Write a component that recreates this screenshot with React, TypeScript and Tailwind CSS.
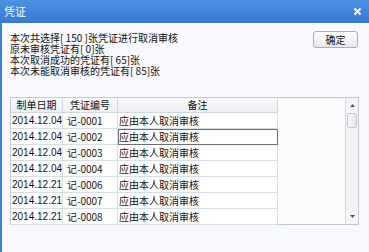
const rows = [
  { date: '2014.12.04', no: '记-0001' },
  { date: '2014.12.04', no: '记-0002', focus: true },
  { date: '2014.12.04', no: '记-0003' },
  { date: '2014.12.04', no: '记-0004' },
  { date: '2014.12.21', no: '记-0006' },
  { date: '2014.12.21', no: '记-0007' },
  { date: '2014.12.21', no: '记-0008' },
]

export default function App() {
  return (
    <div className="flex h-[252px] w-[369px] flex-col overflow-hidden bg-[#f7f9fd] font-['Noto_Sans_CJK_SC',sans-serif] text-[#111]">
      {/* title bar */}
      <div className="flex h-[23px] items-center justify-between bg-gradient-to-b from-[#4d91e3] to-[#3878d4] pr-[7px] pl-[4px] text-[11px] text-white">
        <span>凭证</span>
        <svg width="9" height="9" viewBox="0 0 9 9">
          <path d="M1.5 1.5 L7.5 7.5 M7.5 1.5 L1.5 7.5" stroke="#fff" strokeWidth="2" />
        </svg>
      </div>

      <div className="flex flex-1 flex-col border-l-2 border-[#3d7fd9] pl-[8px]">
        <div className="flex items-start justify-between pt-[9px] pr-[11px]">
          <div className="text-[10px] leading-[11px] whitespace-pre">
            <div>本次共选择[ 150 ]张凭证进行取消审核</div>
            <div>原未审核凭证有[ 0]张</div>
            <div>本次取消成功的凭证有[ 65]张</div>
            <div>本次未能取消审核的凭证有[ 85]张</div>
          </div>
          <button className="mt-[-1px] flex h-[17px] w-[45px] items-center justify-center rounded-[3px] border border-[#a9afb8] bg-gradient-to-b from-[#ffffff] to-[#e6e8ec] text-[10px]">
            确定
          </button>
        </div>

        <div className="mt-[21px] flex h-[128px] w-[349px] border border-[#c3c8d0] bg-[#fafbfd]">
          <div className="flex flex-1 flex-col">
            <div className="flex h-[15px] text-[10px] leading-[14px]">
              <div className="w-[52px] border-r border-b border-[#d2d8e2] bg-gradient-to-b from-[#fbfbfc] to-[#eceef2] text-center">制单日期</div>
              <div className="w-[55px] border-r border-b border-[#d2d8e2] bg-gradient-to-b from-[#fbfbfc] to-[#eceef2] text-center">凭证编号</div>
              <div className="w-[160px] border-r border-b border-[#d2d8e2] bg-gradient-to-b from-[#fbfbfc] to-[#eceef2] text-center">备注</div>
            </div>
            {rows.map((r) => (
              <div key={r.no} className="flex h-[16px] text-[10px] leading-[15px]">
                <div className="w-[52px] overflow-hidden border-r border-b border-[#d6dee9] bg-white pl-[1px] font-['Liberation_Sans',sans-serif] whitespace-nowrap">
                  {r.date}
                </div>
                <div className="w-[55px] border-r border-b border-[#d6dee9] bg-white pl-[4px]">{r.no}</div>
                <div
                  className={
                    r.focus
                      ? 'w-[160px] border-r border-b border-[#d6dee9] bg-white pl-[1px] outline outline-1 -outline-offset-1 outline-[#6e6e6e]'
                      : 'w-[160px] border-r border-b border-[#d6dee9] bg-white pl-[1px]'
                  }
                >
                  应由本人取消审核
                </div>
              </div>
            ))}
          </div>

          {/* scrollbar */}
          <div className="flex w-[13px] flex-col border-l border-[#d3d7de] bg-[#f3f4f6]">
            <div className="flex h-[15px] items-center justify-center">
              <svg width="5" height="3" viewBox="0 0 5 3">
                <path d="M0 3 L2.5 0 L5 3 Z" fill="#555" />
              </svg>
            </div>
            <div className="mx-[1px] h-[15px] rounded-[2px] border border-[#c2c7cf] bg-gradient-to-r from-[#f6f7f9] to-[#e3e6ea]" />
            <div className="flex-1" />
            <div className="flex h-[15px] items-center justify-center">
              <svg width="5" height="3" viewBox="0 0 5 3">
                <path d="M0 0 L5 0 L2.5 3 Z" fill="#555" />
              </svg>
            </div>
          </div>
        </div>
      </div>
    </div>
  )
}
